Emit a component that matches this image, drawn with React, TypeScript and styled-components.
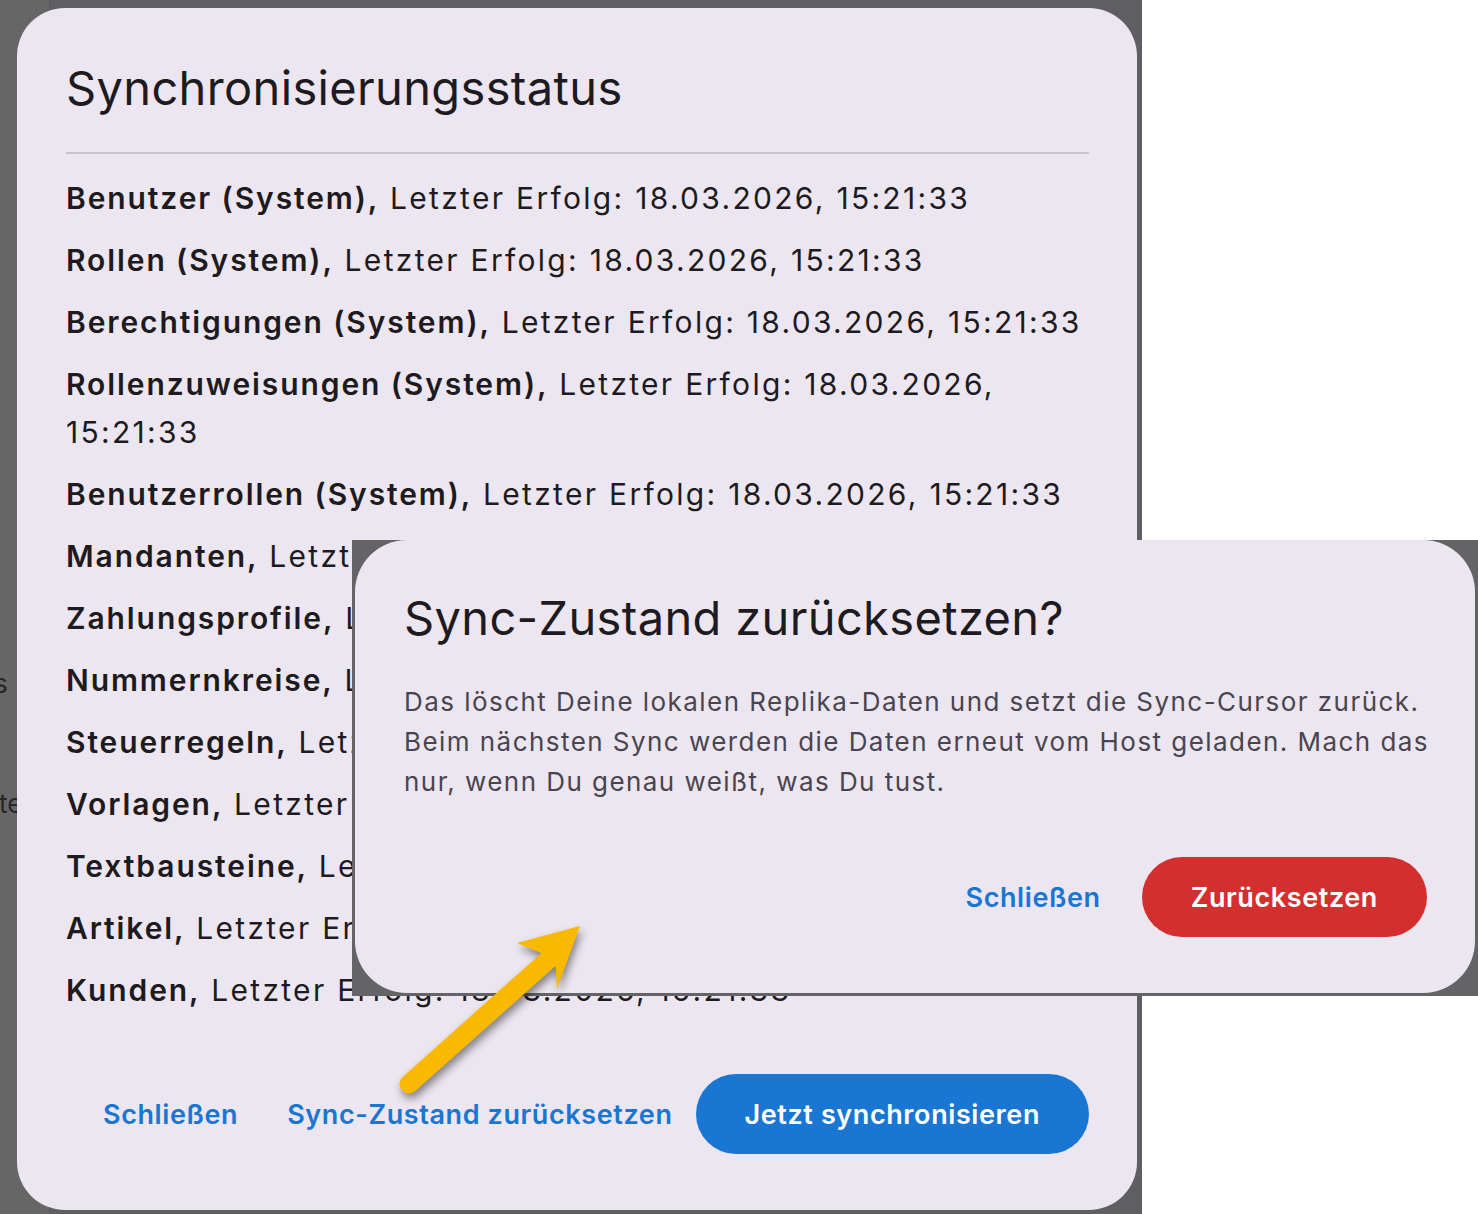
import React from 'react'
import styled, { createGlobalStyle } from 'styled-components'

const GlobalStyle = createGlobalStyle`
  html, body {
    margin: 0;
    padding: 0;
    background: #ffffff;
  }
  body {
    font-family: Inter, 'Noto Sans', 'Liberation Sans', sans-serif;
    -webkit-font-smoothing: antialiased;
  }
`

const colors = {
  surface: '#ece6f0',
  text: '#1d1b20',
  textMuted: '#49454f',
  divider: '#cac4d0',
  primary: '#1976d2',
  danger: '#d32f2f',
  scrim: '#5f5e62',
  scrimSidebar: '#666666',
  arrow: '#f9b900',
}

const Page = styled.div`
  position: relative;
  width: 1478px;
  height: 1214px;
  display: flex;
  overflow: hidden;
  background: #ffffff;
`

const Backdrop = styled.div`
  width: 1142px;
  height: 1214px;
  box-sizing: border-box;
  padding: 8px 5px 4px 0;
  display: flex;
  background: linear-gradient(
    to right,
    ${colors.scrimSidebar} 0,
    ${colors.scrimSidebar} 49px,
    #58575a 49px,
    #58575a 50px,
    ${colors.scrim} 50px
  );
`

const SideStrip = styled.div`
  width: 17px;
  flex-shrink: 0;
  overflow: hidden;
  display: flex;
  flex-direction: column;
  align-items: flex-start;
  padding-top: 660px;
  gap: 88px;
`

const Fragment = styled.span<{ $shift?: number }>`
  font-size: 26px;
  line-height: 32px;
  color: #262528;
  white-space: nowrap;
  margin-left: ${({ $shift }) => $shift ?? 0}px;
`

const Dialog = styled.div<{ $padTop?: number }>`
  flex: 1;
  box-sizing: border-box;
  background: ${colors.surface};
  border-radius: 48px;
  padding: ${({ $padTop }) => $padTop ?? 53}px 48px 56px 49px;
  display: flex;
  flex-direction: column;
  color: ${colors.text};
`

const Title = styled.h2`
  margin: 0;
  font-size: 47px;
  line-height: 54px;
  font-weight: 400;
  letter-spacing: 0.35px;
  color: ${colors.text};
`

const Divider = styled.hr`
  border: none;
  height: 2px;
  background: ${colors.divider};
  margin: 37px 0 20px;
`

const StatusList = styled.ul`
  list-style: none;
  margin: 0;
  padding: 0;
  display: flex;
  flex-direction: column;
  gap: 14px;
`

const StatusItem = styled.li`
  font-size: 30px;
  line-height: 48px;
  letter-spacing: 2.3px;
  color: ${colors.text};
`

const Label = styled.strong`
  font-weight: 600;
  letter-spacing: 1.9px;
`

const Footer = styled.div`
  margin-top: auto;
  display: flex;
  justify-content: flex-end;
  align-items: center;
`

const TextButton = styled.button<{ $gap?: number }>`
  border: none;
  background: transparent;
  font-family: inherit;
  font-size: 27px;
  font-weight: 600;
  letter-spacing: 0.6px;
  color: ${colors.primary};
  padding: 0 16px;
  height: 80px;
  margin-left: ${({ $gap }) => $gap ?? 0}px;
  cursor: pointer;
`

const FilledButton = styled.button<{ $tone: 'primary' | 'danger'; $gap?: number }>`
  border: none;
  height: 80px;
  border-radius: 40px;
  padding: 0 49px;
  font-family: inherit;
  font-size: 27px;
  font-weight: 600;
  letter-spacing: 0.6px;
  color: #ffffff;
  background: ${({ $tone }) => ($tone === 'danger' ? colors.danger : colors.primary)};
  margin-left: ${({ $gap }) => $gap ?? 0}px;
  cursor: pointer;
`

// pasted screenshot of the confirm dialog, with its own scrim around the corners
const Snapshot = styled.div`
  position: absolute;
  left: 352px;
  top: 540px;
  width: 1126px;
  height: 456px;
  box-sizing: border-box;
  padding: 0 3px 3px 3px;
  display: flex;
  background: #646366;
`

const ConfirmDialog = styled(Dialog)`
  border-radius: 52px;
`

const ConfirmText = styled.p`
  margin: 37px -6px 0 0;
  font-size: 26px;
  line-height: 40px;
  letter-spacing: 1.45px;
  color: ${colors.textMuted};
`

const ArrowLayer = styled.svg`
  position: absolute;
  left: 0;
  top: 0;
  pointer-events: none;
  filter: drop-shadow(2px 5px 4px rgba(0, 0, 0, 0.45));
`

const rows: { label: string; time: string }[] = [
  { label: 'Benutzer (System)', time: '18.03.2026, 15:21:33' },
  { label: 'Rollen (System)', time: '18.03.2026, 15:21:33' },
  { label: 'Berechtigungen (System)', time: '18.03.2026, 15:21:33' },
  { label: 'Rollenzuweisungen (System)', time: '18.03.2026, 15:21:33' },
  { label: 'Benutzerrollen (System)', time: '18.03.2026, 15:21:33' },
  { label: 'Mandanten', time: '18.03.2026, 15:21:33' },
  { label: 'Zahlungsprofile', time: '18.03.2026, 15:21:33' },
  { label: 'Nummernkreise', time: '18.03.2026, 15:21:33' },
  { label: 'Steuerregeln', time: '18.03.2026, 15:21:33' },
  { label: 'Vorlagen', time: '18.03.2026, 15:21:33' },
  { label: 'Textbausteine', time: '18.03.2026, 15:21:33' },
  { label: 'Artikel', time: '18.03.2026, 15:21:33' },
  { label: 'Kunden', time: '18.03.2026, 15:21:33' },
]

const Arrow = () => (
  <ArrowLayer width={1478} height={1214} viewBox="0 0 1478 1214">
    <line x1={409} y1={1084} x2={548} y2={960} stroke={colors.arrow} strokeWidth={19} strokeLinecap="round" />
    <polygon points="580,926 517,943 541,953 556,968 557,989" fill={colors.arrow} />
  </ArrowLayer>
)

export default function App() {
  return (
    <Page>
      <GlobalStyle />
      <Backdrop>
        <SideStrip>
          <Fragment $shift={-6}>s</Fragment>
          <Fragment $shift={-1}>te</Fragment>
        </SideStrip>
        <Dialog>
          <Title>Synchronisierungsstatus</Title>
          <Divider />
          <StatusList>
            {rows.map((r) => (
              <StatusItem key={r.label}>
                <Label>{r.label},</Label> Letzter Erfolg: {r.time}
              </StatusItem>
            ))}
          </StatusList>
          <Footer>
            <TextButton>Schließen</TextButton>
            <TextButton $gap={17}>Sync-Zustand zurücksetzen</TextButton>
            <FilledButton $tone="primary" $gap={7}>
              Jetzt synchronisieren
            </FilledButton>
          </Footer>
        </Dialog>
      </Backdrop>

      <Snapshot>
        <ConfirmDialog $padTop={51}>
          <Title>Sync-Zustand zurücksetzen?</Title>
          <ConfirmText>
            Das löscht Deine lokalen Replika-Daten und setzt die Sync-Cursor zurück. Beim nächsten Sync werden
            die Daten erneut vom Host geladen. Mach das nur, wenn Du genau weißt, was Du tust.
          </ConfirmText>
          <Footer>
            <TextButton>Schließen</TextButton>
            <FilledButton $tone="danger" $gap={25}>
              Zurücksetzen
            </FilledButton>
          </Footer>
        </ConfirmDialog>
      </Snapshot>

      <Arrow />
    </Page>
  )
}
